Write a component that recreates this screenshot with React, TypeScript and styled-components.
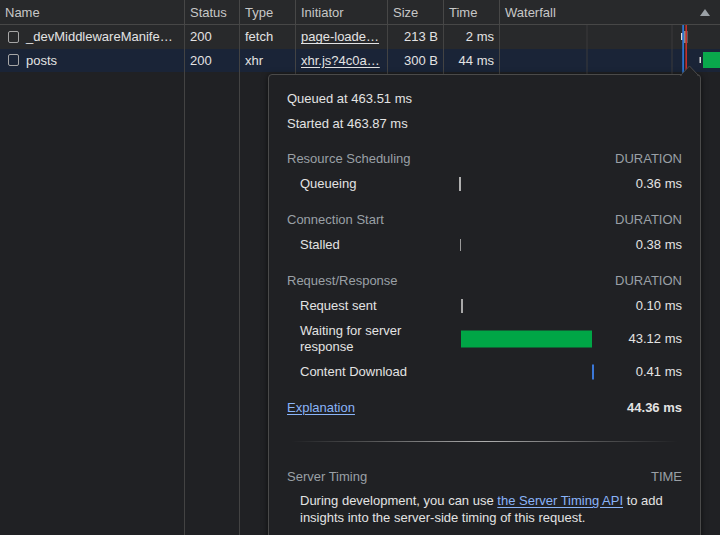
import React from 'react';
import styled, { createGlobalStyle } from 'styled-components';

const Global = createGlobalStyle`
  html, body { margin: 0; padding: 0; background: #202124; }
  body {
    font-family: "Liberation Sans", Arial, sans-serif;
    font-size: 13px;
    color: #e3e3e3;
    overflow: hidden;
  }
  * { box-sizing: border-box; }
`;

const COLS = '185px 55px 56px 92px 56px 56px 1fr';

const Page = styled.div`
  position: relative;
  width: 720px;
  height: 535px;
  overflow: hidden;
  background: #202124;
`;

const Table = styled.div`
  position: relative;
  display: flex;
  flex-direction: column;
  height: 100%;
`;

const Row = styled.div<{ $h?: string; $bg?: string; $grow?: boolean }>`
  display: grid;
  grid-template-columns: ${COLS};
  height: ${(p) => p.$h ?? 'auto'};
  flex: ${(p) => (p.$grow ? '1' : 'none')};
  background: ${(p) => p.$bg ?? 'transparent'};
`;

const HeaderRow = styled(Row)`
  border-bottom: 1px solid #474747;
  color: #c7c7c7;
`;

const HeaderCell = styled.div<{ $last?: boolean }>`
  display: flex;
  align-items: center;
  justify-content: space-between;
  padding: 0 10px 0 5px;
  border-right: ${(p) => (p.$last ? 'none' : '1px solid #474747')};
  white-space: nowrap;
  overflow: hidden;
`;

const Cell = styled.div<{ $right?: boolean; $last?: boolean }>`
  display: flex;
  align-items: center;
  justify-content: ${(p) => (p.$right ? 'flex-end' : 'flex-start')};
  gap: 7px;
  padding: 0 5px;
  border-right: ${(p) => (p.$last ? 'none' : '1px solid #434343')};
  white-space: nowrap;
  overflow: hidden;
`;

const Checkbox = styled.span`
  flex: none;
  width: 11px;
  height: 12px;
  margin-left: 3px;
  border: 1px solid #a6a6a6;
  border-radius: 2px;
`;

const Underlined = styled.span`
  text-decoration: underline;
  text-underline-offset: 2px;
`;

const SortArrow = styled.span`
  width: 0;
  height: 0;
  border-left: 5px solid transparent;
  border-right: 5px solid transparent;
  border-bottom: 7px solid #9aa0a6;
`;

const ChartSvg = styled.svg`
  position: absolute;
  left: 500px;
  top: 25px;
  pointer-events: none;
`;

const Popover = styled.div`
  position: absolute;
  left: 268px;
  top: 74px;
  width: 433px;
  bottom: -10px;
  background: #202124;
  border: 1px solid #4a4a4a;
  border-radius: 4px;
  box-shadow: 0 1px 6px rgba(0, 0, 0, 0.6);
  padding: 11px 18px 0 18px;
`;

const Arrow = styled.svg`
  position: absolute;
  top: -10px;
  left: 411px;
`;

const InfoLine = styled.div`
  height: 25px;
  line-height: 25px;
`;

const SectionHeader = styled.div<{ $gap: number }>`
  display: flex;
  justify-content: space-between;
  height: 25px;
  line-height: 25px;
  margin-top: ${(p) => p.$gap}px;
  color: #9aa0a6;
`;

const TimingRow = styled.div`
  display: grid;
  grid-template-columns: 172px 135px 1fr;
  align-items: center;
  padding: 4.5px 0;
  line-height: 16px;
`;

const Label = styled.div`
  padding: 0 22px 0 13px;
`;

const Track = styled.div`
  position: relative;
  height: 16px;
`;

const Bar = styled.div<{ $color: string; $h: number }>`
  position: absolute;
  top: 50%;
  height: ${(p) => p.$h}px;
  transform: translateY(-50%);
  background: ${(p) => p.$color};
`;

const Value = styled.div<{ $bold?: boolean }>`
  text-align: right;
  font-weight: ${(p) => (p.$bold ? 700 : 400)};
`;

const FooterRow = styled.div`
  display: flex;
  justify-content: space-between;
  height: 25px;
  line-height: 25px;
  margin-top: 11px;
`;

const Link = styled.a`
  color: #8ab4f8;
  text-decoration: underline;
  text-underline-offset: 2px;
  cursor: pointer;
`;

const Divider = styled.div`
  height: 1px;
  margin: 21px 4px 0;
  background: linear-gradient(
    to right,
    rgba(120, 120, 120, 0) 0%,
    rgba(120, 120, 120, 0.55) 20%,
    rgba(190, 190, 190, 0.9) 50%,
    rgba(120, 120, 120, 0.55) 80%,
    rgba(120, 120, 120, 0) 100%
  );
`;

const Paragraph = styled.p`
  margin: 3px 0 0;
  padding-left: 13px;
  line-height: 17px;
`;

type Req = {
  name: string;
  status: string;
  type: string;
  initiator: string;
  size: string;
  time: string;
  bg: string;
};

const requests: Req[] = [
  {
    name: '_devMiddlewareManife…',
    status: '200',
    type: 'fetch',
    initiator: 'page-loade…',
    size: '213 B',
    time: '2 ms',
    bg: '#28292b',
  },
  {
    name: 'posts',
    status: '200',
    type: 'xhr',
    initiator: 'xhr.js?4c0a…',
    size: '300 B',
    time: '44 ms',
    bg: '#1a2437',
  },
];

const TOTAL = 44.36;
const TRACK = 135;

type Phase = { label: string; start: number; dur: number; value: string; color: string; h: number; min: number };

const sections: { title: string; phases: Phase[] }[] = [
  {
    title: 'Resource Scheduling',
    phases: [{ label: 'Queueing', start: 0, dur: 0.36, value: '0.36 ms', color: '#b0b0b0', h: 14, min: 2 }],
  },
  {
    title: 'Connection Start',
    phases: [{ label: 'Stalled', start: 0.36, dur: 0.38, value: '0.38 ms', color: '#9a9a9a', h: 12, min: 1 }],
  },
  {
    title: 'Request/Response',
    phases: [
      { label: 'Request sent', start: 0.74, dur: 0.1, value: '0.10 ms', color: '#a8a8a8', h: 14, min: 2 },
      { label: 'Waiting for server response', start: 0.84, dur: 43.12, value: '43.12 ms', color: '#00a646', h: 17, min: 1 },
      { label: 'Content Download', start: 43.96, dur: 0.41, value: '0.41 ms', color: '#3b78d8', h: 15, min: 1.5 },
    ],
  },
];

function PhaseBar({ p }: { p: Phase }) {
  const left = Math.floor((p.start / TOTAL) * TRACK);
  const width = Math.max(p.min, p.dur > 1 ? Math.round((p.dur / TOTAL) * TRACK) : p.min);
  return (
    <Track>
      <Bar $color={p.color} $h={p.h} style={{ left, width }} />
    </Track>
  );
}

export default function App() {
  return (
    <Page>
      <Global />
      <Table>
        <HeaderRow $h="25px" $bg="#28292b">
          <HeaderCell>Name</HeaderCell>
          <HeaderCell>Status</HeaderCell>
          <HeaderCell>Type</HeaderCell>
          <HeaderCell>Initiator</HeaderCell>
          <HeaderCell>Size</HeaderCell>
          <HeaderCell>Time</HeaderCell>
          <HeaderCell $last>
            Waterfall
            <SortArrow />
          </HeaderCell>
        </HeaderRow>

        {requests.map((r) => (
          <Row key={r.name} $h="23.5px" $bg={r.bg}>
            <Cell>
              <Checkbox />
              {r.name}
            </Cell>
            <Cell>{r.status}</Cell>
            <Cell>{r.type}</Cell>
            <Cell>
              <Underlined>{r.initiator}</Underlined>
            </Cell>
            <Cell $right>{r.size}</Cell>
            <Cell $right>{r.time}</Cell>
            <Cell $last />
          </Row>
        ))}

        <Row $grow>
          <Cell />
          <Cell />
          <Cell />
          <Cell />
          <Cell />
          <Cell />
          <Cell $last />
        </Row>

        <ChartSvg width="220" height="510" viewBox="0 0 220 510">
          <rect x="86.5" y="0" width="1" height="510" fill="#3a3b3d" />
          <rect x="171.5" y="0" width="1" height="510" fill="#3a3b3d" />
          <rect x="184" y="6" width="3.5" height="12" fill="#8a8a8a" />
          <rect x="181" y="8" width="1.5" height="7" fill="#dcdcdc" />
          <rect x="182.3" y="0" width="1.6" height="48" fill="#2f7de1" />
          <rect x="185.4" y="0" width="1.6" height="48" fill="#c5302b" />
          <rect x="199.5" y="32" width="1.5" height="6" fill="#dcdcdc" />
          <rect x="203" y="27" width="17" height="16" fill="#0aa84c" />
        </ChartSvg>
      </Table>

      <Popover>
        <Arrow width="20" height="11" viewBox="0 0 20 11">
          <path d="M0.5 10.5 L9.5 1 L18.5 10.5 Z" fill="#202124" stroke="#4a4a4a" strokeWidth="1" />
          <rect x="1.5" y="10" width="16" height="1" fill="#202124" />
        </Arrow>
        <InfoLine>Queued at 463.51 ms</InfoLine>
        <InfoLine>Started at 463.87 ms</InfoLine>

        {sections.map((s, i) => (
          <React.Fragment key={s.title}>
            <SectionHeader $gap={i === 0 ? 10 : 11}>
              <span>{s.title}</span>
              <span>DURATION</span>
            </SectionHeader>
            {s.phases.map((p) => (
              <TimingRow key={p.label}>
                <Label>{p.label}</Label>
                <PhaseBar p={p} />
                <Value>{p.value}</Value>
              </TimingRow>
            ))}
          </React.Fragment>
        ))}

        <FooterRow>
          <Link>Explanation</Link>
          <Value $bold>44.36 ms</Value>
        </FooterRow>

        <Divider />

        <SectionHeader $gap={22}>
          <span>Server Timing</span>
          <span>TIME</span>
        </SectionHeader>
        <Paragraph>
          During development, you can use <Link>the Server Timing API</Link> to add insights into the
          server-side timing of this request.
        </Paragraph>
      </Popover>
    </Page>
  );
}
